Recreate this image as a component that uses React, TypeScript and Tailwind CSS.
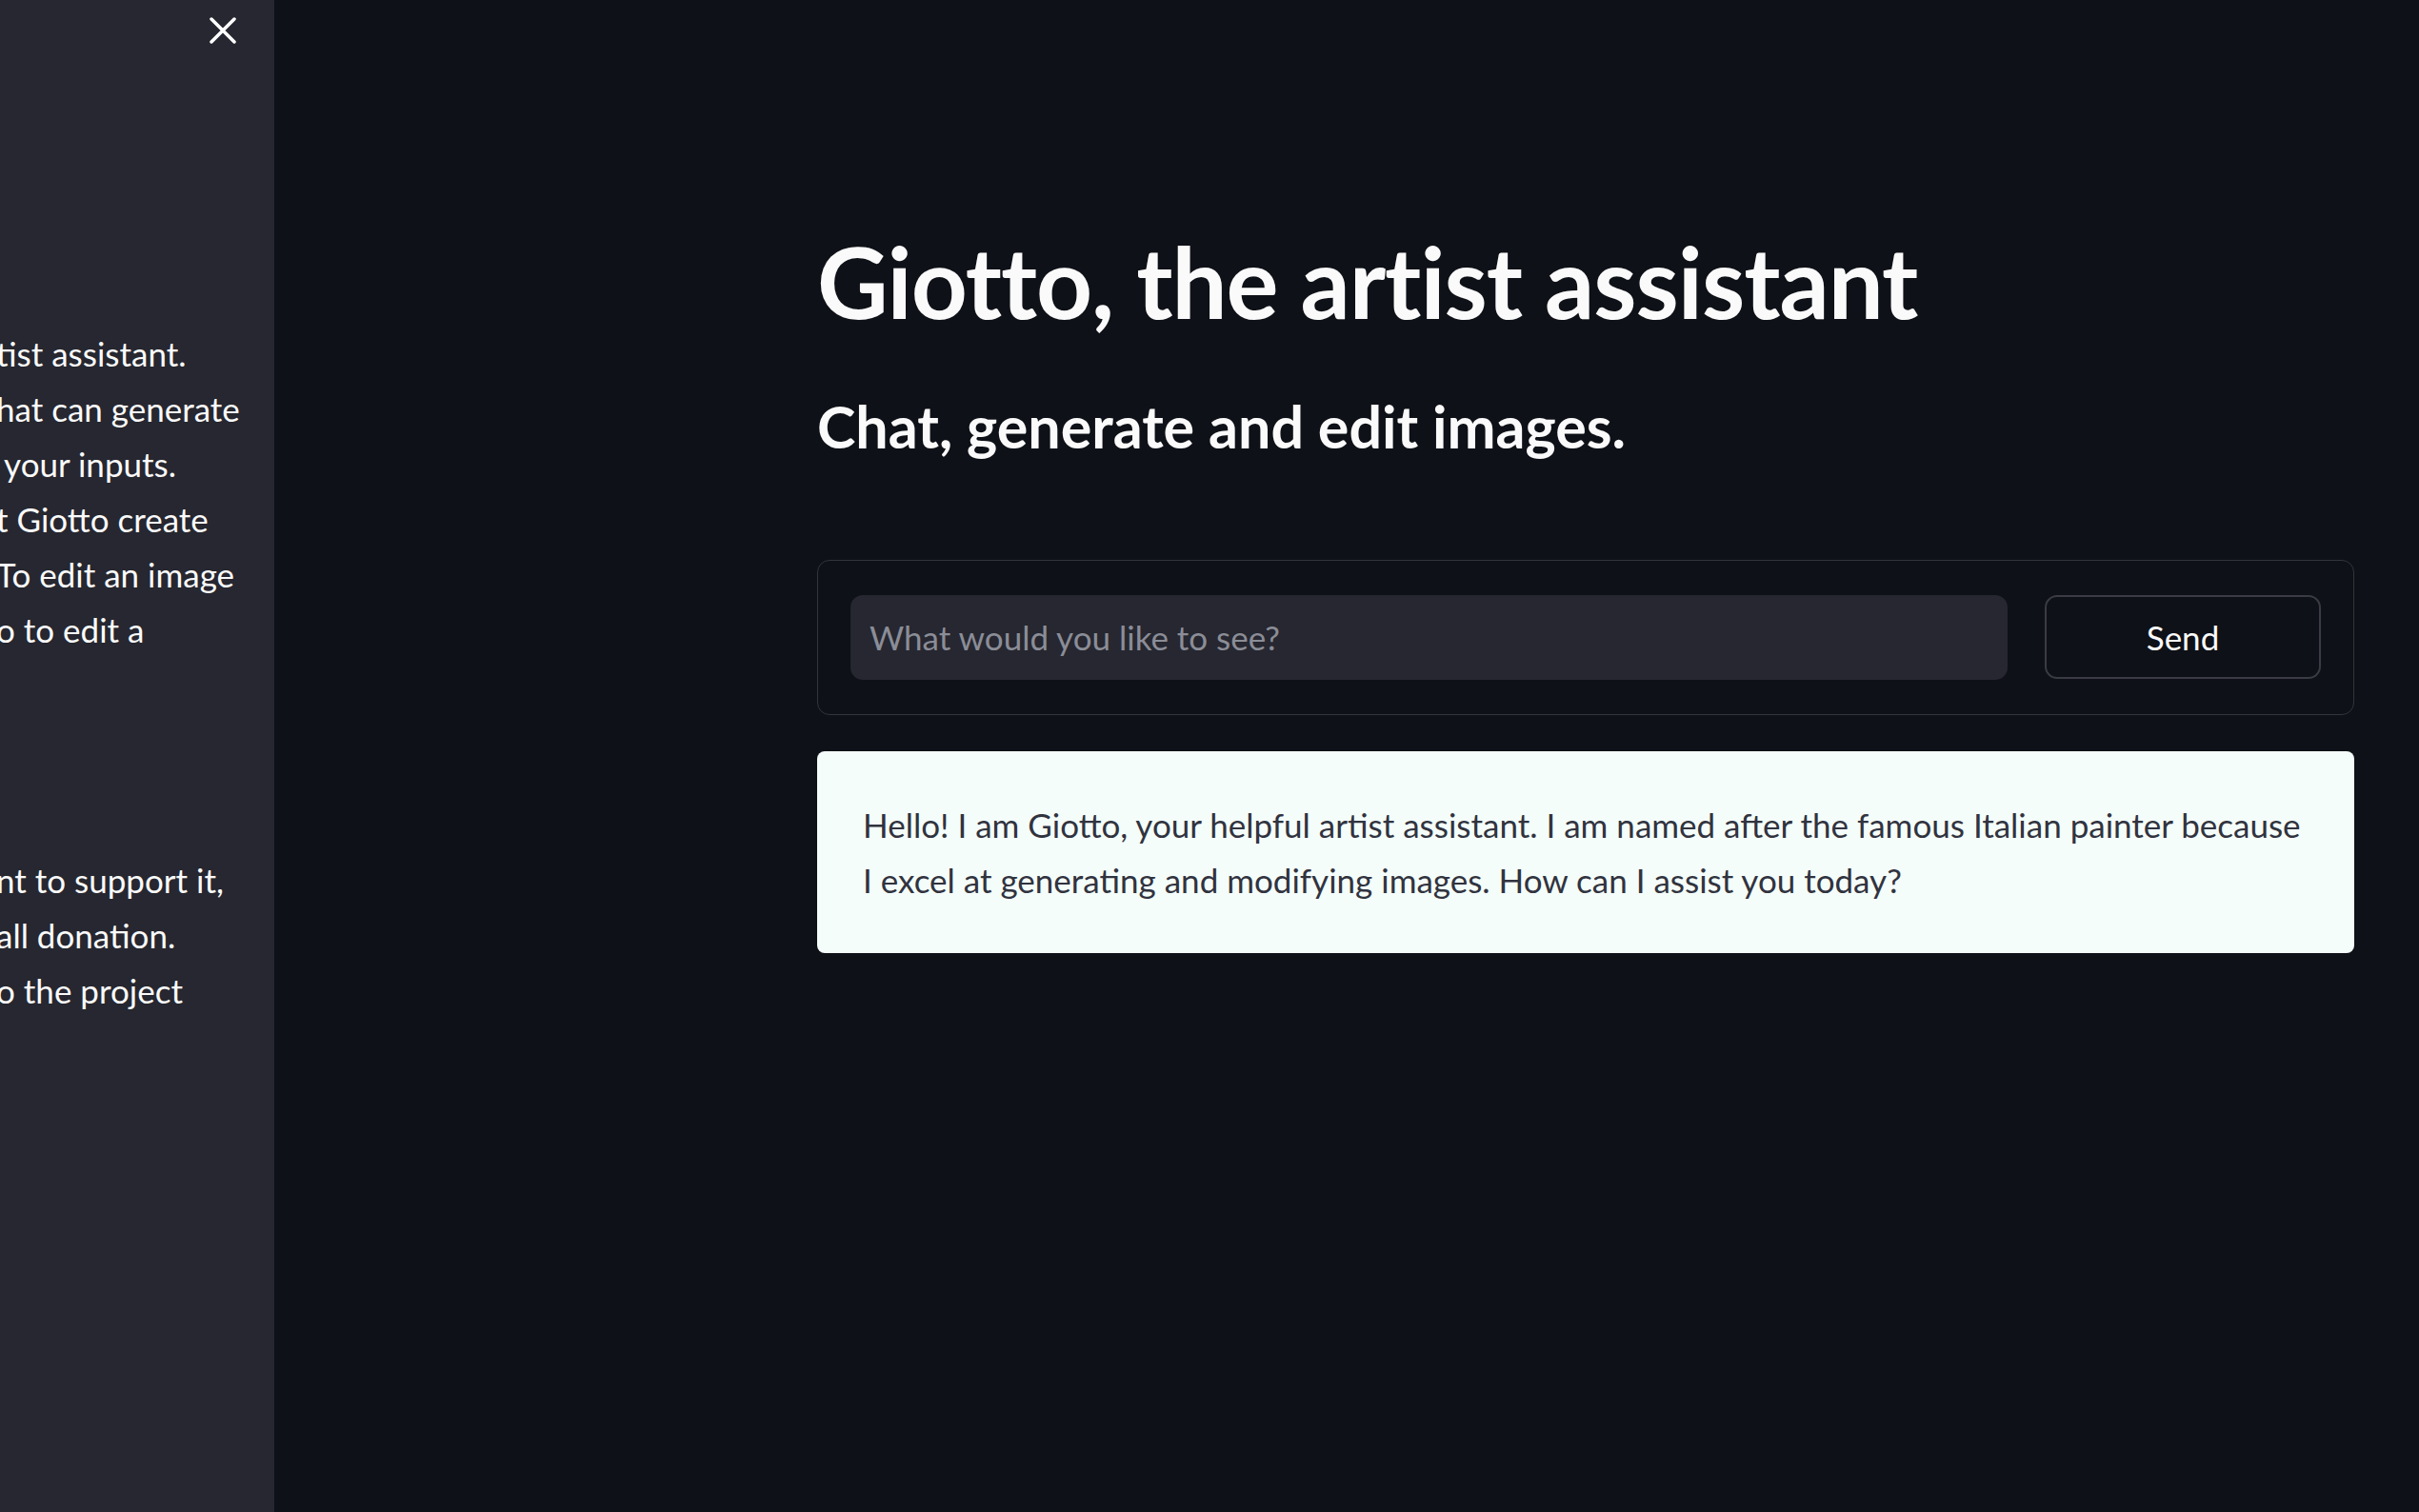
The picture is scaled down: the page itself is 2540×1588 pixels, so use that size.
import { useState } from "react"

const sidebarTop = [
  "tist assistant.",
  "hat can generate",
  " your inputs.",
  "t Giotto create",
  "To edit an image",
  "o to edit a",
]

const sidebarBottom = ["nt to support it,", "all donation.", "o the project"]

export default function App() {
  const [prompt, setPrompt] = useState("")

  return (
    <div className="flex h-screen w-full overflow-hidden bg-[#0e1117] font-['Lato',sans-serif] text-[#fafafa]">
      <aside className="relative w-[288px] shrink-0 overflow-hidden bg-[#262730]">
        <div className="flex justify-end pr-[40px] pt-[18px]">
          <button className="text-white">
            <svg width="28" height="28" viewBox="0 0 28 28" fill="none" stroke="currentColor" strokeWidth="3.5" strokeLinecap="round">
              <path d="M2 2L26 26M26 2L2 26" />
            </svg>
          </button>
        </div>
        <div className="-ml-[4px] mt-[296px] whitespace-pre text-[35px] leading-[58px]">
          {sidebarTop.map((line, i) => (
            <div key={i}>{line}</div>
          ))}
        </div>
        <div className="-ml-[4px] mt-[205px] whitespace-pre text-[35px] leading-[58px]">
          {sidebarBottom.map((line, i) => (
            <div key={i}>{line}</div>
          ))}
        </div>
      </aside>

      <main className="flex-1 pl-[570px] pr-[68px] pt-[234px]">
        <h1 className="text-[103px] font-bold leading-[1.2] tracking-[-0.01em]">Giotto, the artist assistant</h1>
        <h3 className="mt-[53px] text-[61px] font-bold leading-[1.2]">Chat, generate and edit images.</h3>

        <div className="mt-[104px] flex items-center gap-[39px] rounded-[13px] border border-[#33343c] px-[34px] py-[36px]">
          <input
            value={prompt}
            onChange={(e) => setPrompt(e.target.value)}
            placeholder="What would you like to see?"
            className="h-[89px] flex-1 rounded-[13px] bg-[#262730] px-[20px] text-[35px] text-[#fafafa] placeholder:text-[#8b8d97] outline-none"
          />
          <button className="h-[88px] w-[290px] rounded-[13px] border-2 border-[#3a3b44] bg-[#0e1117] text-[35px] text-[#fafafa]">
            Send
          </button>
        </div>

        <div className="mt-[38px] rounded-[8px] bg-[#f4fdf9] p-[48px] text-[35px] leading-[58px] text-[#31333f]">
          Hello! I am Giotto, your helpful artist assistant. I am named after the famous Italian painter because I excel at
          generating and modifying images. How can I assist you today?
        </div>
      </main>
    </div>
  )
}
